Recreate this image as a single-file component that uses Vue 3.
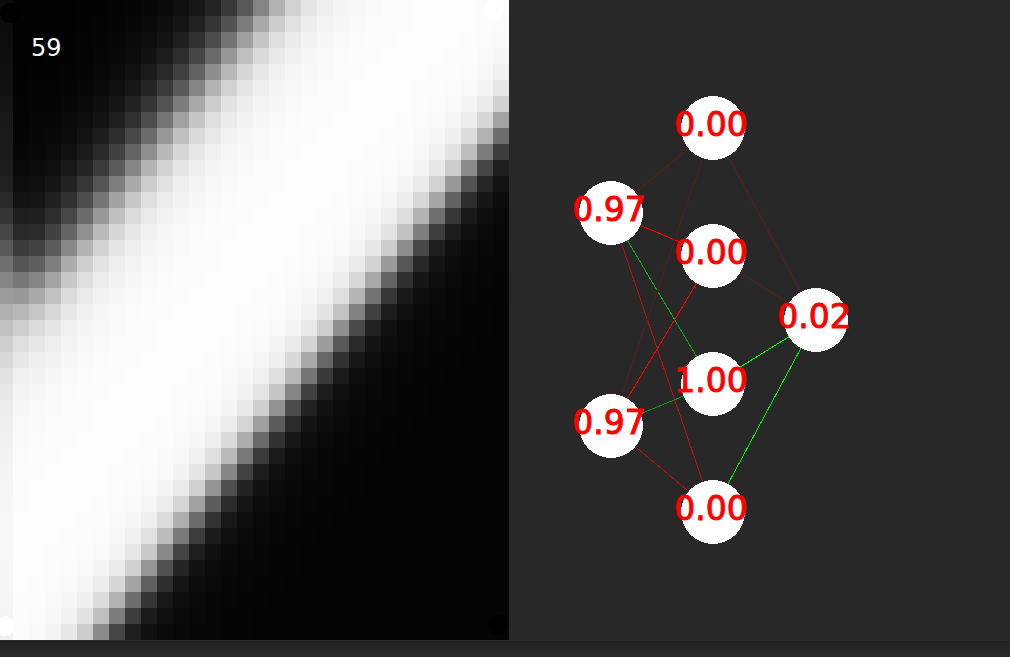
<script setup>
const CELL = 16
const EDGE = 13
const COLS = 31
const ROWS = 40

// Grey level against distance (in cells) from each decision boundary.
const upperProfile = [
  [-12, 2], [-10, 3], [-8, 5], [-7, 7], [-6, 10], [-5, 15], [-4, 23], [-3, 36], [-2, 57],
  [-1, 88], [0, 132], [1, 177], [2, 210], [3, 229], [4, 239], [5, 245], [6, 248],
  [7, 250], [8, 252], [12, 253],
]
const lowerProfile = [
  [-8, 253], [-6, 252], [-5, 251], [-4, 249], [-3, 244], [-2, 232], [-1, 204], [0, 139],
  [1, 69], [2, 30], [3, 16], [4, 10], [5, 8], [6, 6], [8, 5], [10, 4],
]

// Measured output of the three leftmost columns, where the boundary bends.
const leftColumns = {
  '-1': [10, 11, 13, 14, 16, 18, 22, 25, 26, 27, 29, 33, 41, 53, 69, 88, 111, 134, 157, 176,
    193, 206, 217, 226, 232, 236, 239, 241, 243, 245, 246, 247, 248, 248, 248, 247, 247, 246, 244, 241],
  0: [2, 2, 2, 2, 2, 3, 4, 4, 5, 7, 9, 13, 19, 30, 41, 59, 85, 119, 153, 184, 207, 222, 232, 240, 244, 247, 249, 250, 251],
  1: [2, 2, 2, 2, 3, 4, 5, 6, 7, 8, 11, 15, 21, 31, 43, 66, 95, 133, 170, 199, 219, 231, 239, 243, 247, 249, 250, 251, 252],
}

function sample(profile, d) {
  if (d <= profile[0][0]) return profile[0][1]
  for (let i = 1; i < profile.length; i++) {
    const [x1, y1] = profile[i]
    if (d <= x1) {
      const [x0, y0] = profile[i - 1]
      return y0 + ((y1 - y0) * (d - x0)) / (x1 - x0)
    }
  }
  return profile[profile.length - 1][1]
}

function level(col, row) {
  const measured = leftColumns[col]
  const upper = measured && measured[row] !== undefined
    ? measured[row]
    : sample(upperProfile, col + 0.805 * row - 15)
  const lower = sample(lowerProfile, col + 0.793 * (row - 39) - 5)
  return Math.round(Math.min(upper, lower))
}

const cells = []
for (let row = 0; row < ROWS; row++) {
  for (let col = -1; col < COLS; col++) {
    const v = level(col, row)
    cells.push({
      key: `${row}:${col}`,
      x: col < 0 ? 0 : EDGE + col * CELL,
      y: row * CELL,
      w: col < 0 ? EDGE : CELL,
      fill: `rgb(${v},${v},${v})`,
    })
  }
}

const samples = [
  { x: 10, y: 13, fill: '#000' },
  { x: 494, y: 10, fill: '#fff' },
  { x: 5, y: 626, fill: '#fff' },
  { x: 498, y: 625, fill: '#000' },
]

const nodes = [
  { id: 'i1', x: 102, y: 213, value: '0.97' },
  { id: 'i2', x: 102, y: 426, value: '0.97' },
  { id: 'h1', x: 204, y: 128, value: '0.00' },
  { id: 'h2', x: 204, y: 256, value: '0.00' },
  { id: 'h3', x: 204, y: 384, value: '1.00' },
  { id: 'h4', x: 204, y: 512, value: '0.00' },
  { id: 'o1', x: 307, y: 320, value: '0.02' },
]
const byId = Object.fromEntries(nodes.map((n) => [n.id, n]))

const links = [
  ['i1', 'h1', '#591c1c'],
  ['i1', 'h2', '#ff0000'],
  ['i1', 'h3', '#14a814'],
  ['i1', 'h4', '#bc0e0e'],
  ['i2', 'h1', '#541e1e'],
  ['i2', 'h2', '#ff0000'],
  ['i2', 'h3', '#149414'],
  ['i2', 'h4', '#b01010'],
  ['h1', 'o1', '#5a1c1c'],
  ['h2', 'o1', '#5a1c1c'],
  ['h3', 'o1', '#00ff00'],
  ['h4', 'o1', '#00f000'],
].map(([a, b, stroke]) => ({ key: a + b, a: byId[a], b: byId[b], stroke }))
</script>

<template>
  <main class="app">
    <div class="views">
      <svg class="heatmap" viewBox="0 0 509 640" role="img" aria-label="Network output">
        <rect
          v-for="c in cells" :key="c.key"
          :x="c.x" :y="c.y" :width="c.w" height="16" :fill="c.fill"
        />
        <circle v-for="s in samples" :key="s.x" :cx="s.x" :cy="s.y" r="10" :fill="s.fill" />
        <text class="counter" x="31" y="56">59</text>
      </svg>
      <svg class="network" viewBox="0 0 501 640" role="img" aria-label="Network graph">
        <line
          v-for="l in links" :key="l.key"
          :x1="l.a.x" :y1="l.a.y" :x2="l.b.x" :y2="l.b.y" :stroke="l.stroke"
        />
        <g v-for="n in nodes" :key="n.id">
          <circle class="node" :cx="n.x" :cy="n.y" r="32" />
          <text class="value" :x="n.x - 2" :y="n.y + 8">{{ n.value }}</text>
        </g>
      </svg>
    </div>
    <footer class="strip"></footer>
  </main>
</template>

<style scoped>
.app {
  display: flex;
  flex-direction: column;
  min-height: 100vh;
  background: #282828;
}
.views {
  display: flex;
  align-items: flex-start;
}
.heatmap,
.network {
  display: block;
  min-width: 0;
  shape-rendering: crispEdges;
}
.heatmap {
  flex: 509 1 0;
}
.network {
  flex: 501 1 0;
}
.network line {
  stroke-width: 1px;
}
.node {
  fill: #fff;
}
.counter,
.value {
  font-family: "DejaVu Sans", sans-serif;
}
.counter {
  font-size: 24px;
  fill: #fff;
}
.value {
  font-size: 33px;
  text-anchor: middle;
  fill: #f00;
  stroke: #f00;
  stroke-width: 1px;
}
.strip {
  flex: 1;
  min-height: 16px;
  border-top: 1px solid #2b2b2b;
  background: linear-gradient(#232323, #2a2a2a);
}
</style>

<style>
body {
  background: #282828;
}
</style>
